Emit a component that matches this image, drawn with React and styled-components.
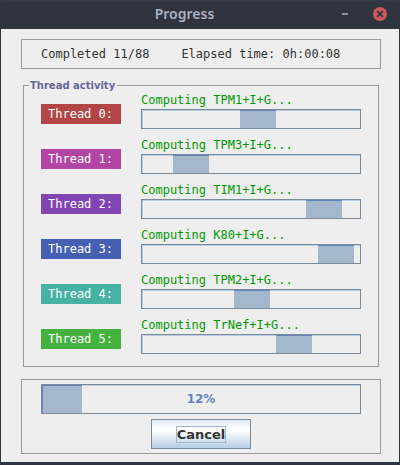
import React from "react";
import styled, { createGlobalStyle } from "styled-components";

const GlobalStyle = createGlobalStyle`
  *, *::before, *::after { box-sizing: border-box; }
  body { margin: 0; background: #2f343f; }
`;

const mono = `12px/14px "DejaVu Sans Mono", monospace`;

const Window = styled.main`
  border: solid #2f343f;
  border-width: 0 1px 3px;
  background: #eeeeee;
  color: #333333;
`;

const TitleBar = styled.header`
  display: grid;
  grid-template-columns: 1fr 36px 34px;
  align-items: center;
  justify-items: center;
  height: 29px;
  padding: 0 2px 2px 0;
  background: #2f343f;
  border-top: 1px solid #353945;
`;

const Title = styled.h1`
  margin: 0 0 0 41px;
  font: 600 14px/20px "Noto Sans", sans-serif;
  color: #a9b1c0;
`;

const WindowButton = styled.button`
  display: flex;
  padding: 0;
  border: 0;
  background: none;
`;

const Content = styled.div`
  display: flex;
  flex-direction: column;
  padding: 10px 18px 8px 20px;
`;

const Panel = styled.section`
  border: 1px solid #999999;
`;

const Summary = styled(Panel)`
  display: flex;
  gap: 32px;
  padding: 7px 19px;
  font: ${mono};
`;

const ThreadGroup = styled.fieldset`
  min-width: 0;
  margin: 10px 2px 12px;
  padding: 1px 17px 12px;
  border: 1px solid #999999;
`;

const GroupTitle = styled.legend`
  margin-left: -12px;
  padding: 0 2px 0 1px;
  font: bold 10px/13px "DejaVu Sans", sans-serif;
  color: #666699;
`;

const ThreadList = styled.div`
  display: flex;
  flex-direction: column;
  gap: 9px;
`;

const ThreadRow = styled.div`
  display: grid;
  grid-template-columns: 80px 1fr;
  column-gap: 20px;
  align-items: end;
`;

const ThreadName = styled.span`
  margin-bottom: 5px;
  padding: 3px 7px;
  background: ${(p) => p.$color};
  color: #ffffff;
  font: ${mono};
`;

const ThreadStatus = styled.div`
  display: flex;
  flex-direction: column;
  gap: 2px;
  color: #009900;
  font: ${mono};
`;

const Track = styled.div`
  display: grid;
  height: ${(p) => p.$height}px;
  border: 1px solid #7a8a99;
  box-shadow: inset 1px 1px #b8cfe5;
`;

const Chunk = styled.div`
  grid-area: 1 / 1;
  background: #a3b8cc;
  border-top: 1px solid #6382bf;
  border-left: ${(p) => (p.$atStart ? "1px solid #6382bf" : "0")};
`;

const Percent = styled.span`
  grid-area: 1 / 1;
  place-self: center;
  font: bold 12px/16px "DejaVu Sans", sans-serif;
  color: #6382bf;
`;

const Footer = styled(Panel)`
  display: flex;
  flex-direction: column;
  gap: 5px;
  padding: 4px 19px;
`;

const CancelButton = styled.button`
  align-self: center;
  width: 100px;
  height: 30px;
  padding: 0;
  border: 1px solid #7a8a99;
  background: linear-gradient(#dde8f3, #ffffff 30%, #ffffff 36%, #b8cfe5);
  color: #333333;
  font: bold 13px/15px "DejaVu Sans", sans-serif;
`;

const FocusRing = styled.span`
  display: inline-block;
  border: 1px solid #a3b8cc;
`;

const threads = [
  { color: "#b24545", model: "TPM1+I+G", start: 45 },
  { color: "#b245a4", model: "TPM3+I+G", start: 14.2 },
  { color: "#8045b2", model: "TIM1+I+G", start: 75.2 },
  { color: "#4560b2", model: "K80+I+G", start: 80.7 },
  { color: "#45b2a4", model: "TPM2+I+G", start: 42.2 },
  { color: "#45b240", model: "TrNef+I+G", start: 61.5 },
];

function Bar({ label, height, start, width, value, children }) {
  return (
    <Track role="progressbar" aria-label={label} aria-valuenow={value} $height={height}>
      <Chunk $atStart={start === 0} style={{ marginLeft: `${start}%`, width: `${width}%` }} />
      {children}
    </Track>
  );
}

export default function App() {
  return (
    <>
      <GlobalStyle />
      <Window>
        <TitleBar>
          <Title>Progress</Title>
          <WindowButton aria-label="Minimize">
            <svg width="6" height="2"><rect width="6" height="2" fill="#90949e" /></svg>
          </WindowButton>
          <WindowButton aria-label="Close">
            <svg width="14" height="14" viewBox="0 0 14 14">
              <circle cx="7" cy="7" r="7" fill="#cc575d" />
              <path d="M4.2 4.2l5.6 5.6m0-5.6l-5.6 5.6" stroke="#2f343f" strokeWidth="1.7" />
            </svg>
          </WindowButton>
        </TitleBar>
        <Content>
          <Summary>
            <span>Completed 11/88</span>
            <span>Elapsed time: 0h:00:08</span>
          </Summary>
          <ThreadGroup>
            <GroupTitle>Thread activity</GroupTitle>
            <ThreadList>
              {threads.map((t, i) => (
                <ThreadRow key={i}>
                  <ThreadName $color={t.color}>Thread {i}:</ThreadName>
                  <ThreadStatus>
                    <span>Computing {t.model}...</span>
                    <Bar label={`Thread ${i}`} height={20} start={t.start} width={16.5} />
                  </ThreadStatus>
                </ThreadRow>
              ))}
            </ThreadList>
          </ThreadGroup>
          <Footer>
            <Bar label="Overall progress" height={30} start={0} width={12.5} value={12}>
              <Percent>12%</Percent>
            </Bar>
            <CancelButton><FocusRing>Cancel</FocusRing></CancelButton>
          </Footer>
        </Content>
      </Window>
    </>
  );
}
